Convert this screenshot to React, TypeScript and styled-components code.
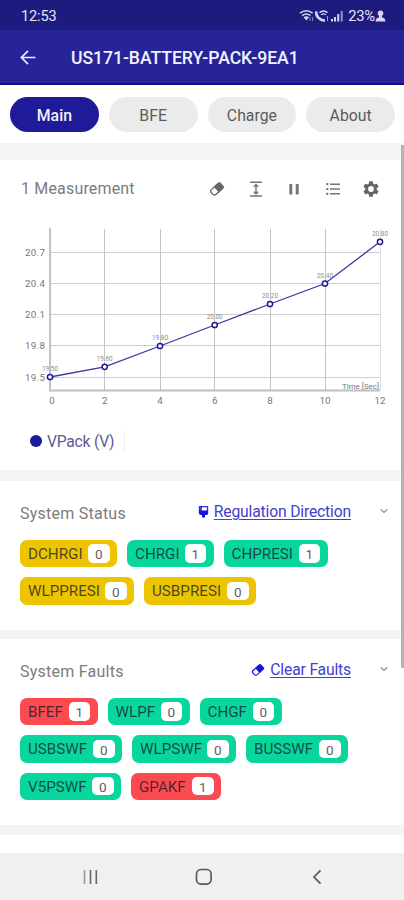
import React from "react";
import styled, { createGlobalStyle } from "styled-components";

const GlobalStyle = createGlobalStyle`
  * { box-sizing: border-box; }
  body { margin: 0; background: #fff; font-family: Roboto, "Liberation Sans", sans-serif; }
  button { font-family: inherit; border: 0; padding: 0; background: none; }
`;

const Screen = styled.div`
  width: 404px;
  height: 900px;
  display: flex;
  flex-direction: column;
  overflow: hidden;
  background: #fff;
`;

const StatusBar = styled.div`
  height: 30px;
  flex: none;
  display: flex;
  align-items: center;
  justify-content: space-between;
  padding: 2px 18px 0 21px;
  background: #1e1b7e;
  color: #e4e3f5;
  font-size: 14.5px;
`;

const StatusIcons = styled.div`
  display: flex;
  align-items: center;
  svg { display: block; }
`;

const Clock = styled.span`
  letter-spacing: -0.1px;
`;

const Percent = styled.span`
  margin-left: 2px;
  font-size: 14.8px;
  letter-spacing: -0.2px;
`;

const AppBar = styled.header`
  height: 55px;
  flex: none;
  display: flex;
  align-items: center;
  padding-left: 20px;
  background: #27249a;
  border-bottom: 2px solid #0f0c84;
`;

const Title = styled.h1`
  margin: 2px 0 0 35px;
  color: #f3f2fc;
  font-size: 17.6px;
  font-weight: 500;
  letter-spacing: -0.05px;
  white-space: nowrap;
`;

const Tabs = styled.nav`
  height: 58px;
  flex: none;
  display: grid;
  grid-template-columns: repeat(4, 1fr);
  gap: 10px;
  padding: 12px 9px 11px 10px;
`;

const Tab = styled.button<{ $active?: boolean }>`
  height: 35px;
  padding-top: 2px;
  border-radius: 18px;
  font-size: 15.8px;
  font-weight: ${(p) => (p.$active ? 500 : 400)};
  color: ${(p) => (p.$active ? "#f1f0fa" : "#5c5c5c")};
  background: ${(p) => (p.$active ? "#1f1b98" : "#ebebeb")};
`;

const Scroller = styled.main`
  height: 710px;
  flex: none;
  position: relative;
  background: #f4f4f4;
`;

const ScrollThumb = styled.div`
  position: absolute;
  top: 2px;
  right: 0;
  width: 3px;
  height: 523px;
  background: #b3b3b3;
`;

const Card = styled.section<{ $top: number; $height: number }>`
  margin-top: ${(p) => p.$top}px;
  height: ${(p) => p.$height}px;
  background: #fff;
  overflow: hidden;
`;

const Stack = styled.div`
  display: flex;
  flex-direction: column;
`;

const ChartHead = styled.div`
  display: flex;
  align-items: center;
  justify-content: space-between;
  height: 57px;
  padding: 0 25px 0 21px;
`;

const Tools = styled.div`
  display: flex;
  gap: 22.4px;
  color: #666;
  svg { display: block; }
`;

const Heading = styled.h2<{ $spacing?: number }>`
  margin: 0;
  font-size: 16px;
  line-height: 20px;
  font-weight: 400;
  color: #7c7c7c;
  letter-spacing: ${(p) => p.$spacing ?? 0}px;
  white-space: nowrap;
`;

const Legend = styled.div`
  display: inline-flex;
  align-items: center;
  gap: 5px;
  height: 20px;
  margin: 21px 0 0 30px;
  padding-right: 10px;
  border-right: 1px solid #eee;
  color: #5d5994;
  font-size: 15.7px;
  letter-spacing: -0.25px;
`;

const Dot = styled.i`
  width: 12px;
  height: 12px;
  border-radius: 50%;
  background: #1e1a9d;
`;

const SectionHead = styled.div`
  display: flex;
  height: 59px;
  padding: 21px 15px 0 20px;
`;

const HeadingSlot = styled.div`
  flex: 1;
  padding-top: 2px;
`;

const Link = styled.a`
  font-size: 15.7px;
  line-height: 20px;
  color: #4340cf;
  text-decoration: underline;
  text-decoration-thickness: 1px;
  text-underline-offset: 2px;
  letter-spacing: -0.17px;
  white-space: nowrap;
`;

const IconSlot = styled.span<{ $gap: number }>`
  display: flex;
  height: 20px;
  align-items: center;
  margin-right: ${(p) => p.$gap}px;
`;

const ChevronSlot = styled.span`
  display: flex;
  height: 18px;
  align-items: center;
  margin-left: 28px;
`;

const Chips = styled.div`
  display: flex;
  flex-direction: column;
  gap: 10px;
  padding-left: 20px;
`;

const ChipRow = styled.div`
  display: flex;
  gap: 10px;
`;

const tones = { amber: "#edc400", green: "#08d69d", red: "#fb4a50" };
type Tone = keyof typeof tones;

const ChipBox = styled.div<{ $tone: Tone; $width: number }>`
  width: ${(p) => p.$width}px;
  height: 27.3px;
  flex: none;
  display: flex;
  align-items: center;
  justify-content: space-between;
  padding: 0 7.5px 0 8px;
  border-radius: 7px;
  background: ${(p) => tones[p.$tone]};
  color: rgba(20, 25, 40, 0.75);
  font-size: 15.2px;
  white-space: nowrap;
`;

const ChipName = styled.span`
  padding-top: 1px;
`;

const Count = styled.span`
  width: 21.5px;
  height: 18.5px;
  padding-top: 1px;
  border-radius: 5px;
  background: #fff;
  color: #606060;
  font-size: 13.5px;
  line-height: 18px;
  text-align: center;
`;

const NavBar = styled.footer`
  height: 47px;
  flex: none;
  display: flex;
  align-items: center;
  padding-left: 82px;
  background: #f0f0f0;
  svg { display: block; }
`;

const NavGap = styled.span<{ $width: number }>`
  width: ${(p) => p.$width}px;
`;

type ChipData = [name: string, value: number, tone: Tone, width: number];

const statusRows: ChipData[][] = [
  [["DCHRGI", 0, "amber", 97], ["CHRGI", 1, "green", 86.5], ["CHPRESI", 1, "green", 104]],
  [["WLPPRESI", 0, "amber", 114], ["USBPRESI", 0, "amber", 112]],
];

const faultRows: ChipData[][] = [
  [["BFEF", 1, "red", 77.5], ["WLPF", 0, "green", 82], ["CHGF", 0, "green", 82]],
  [["USBSWF", 0, "green", 102], ["WLPSWF", 0, "green", 104], ["BUSSWF", 0, "green", 102]],
  [["V5PSWF", 0, "green", 101], ["GPAKF", 1, "red", 90]],
];

const ChipGrid = ({ rows }: { rows: ChipData[][] }) => (
  <Chips>
    {rows.map((row, i) => (
      <ChipRow key={i}>
        {row.map(([name, value, tone, width]) => (
          <ChipBox key={name} $tone={tone} $width={width}>
            <ChipName>{name}</ChipName>
            <Count>{value}</Count>
          </ChipBox>
        ))}
      </ChipRow>
    ))}
  </Chips>
);

const Eraser = ({ size, color }: { size: number; color: string }) => (
  <svg width={size} height={size} viewBox="0 0 16 16">
    <g transform="rotate(-42 8 8)">
      <rect x="1.400" y="4.700" width="12" height="6.600" rx="2" fill="none" stroke={color} strokeWidth="1.300" />
      <path d="M7 4.100h6.400a1.500 1.500 0 0 1 1.500 1.500v4.800a1.500 1.500 0 0 1-1.500 1.500H7z" fill={color} />
    </g>
  </svg>
);

const Chevron = () => (
  <svg width="10" height="8" viewBox="0 0 10 8">
    <path d="M1.800 2.300l3.200 3.200 3.200-3.200" fill="none" stroke="#888" strokeWidth="1.200" />
  </svg>
);

const points = [
  { t: 0, x: 50, y: 377, label: "19.50" },
  { t: 2, x: 104.7, y: 366.8, label: "19.60" },
  { t: 4, x: 160, y: 346, label: "19.80" },
  { t: 6, x: 214.7, y: 325, label: "20.00" },
  { t: 8, x: 270, y: 304, label: "20.20" },
  { t: 10, x: 325, y: 283.5, label: "20.40" },
  { t: 12, x: 380, y: 241.8, label: "20.80" },
];

const levels = [
  { y: 252.5, label: "20.7" },
  { y: 283.5, label: "20.4" },
  { y: 314.5, label: "20.1" },
  { y: 345.5, label: "19.8" },
  { y: 377.5, label: "19.5" },
];

const ChartSvg = styled.svg`
  display: block;
  font-family: Roboto, "Liberation Sans", sans-serif;
`;

const Chart = () => (
  <ChartSvg width="401" height="193" viewBox="0 217 401 193">
    {levels.map((l) => (
      <g key={l.label}>
        <path d={`M50 ${l.y}H380`} stroke="#cfcfcf" />
        <text x="25" y={l.y + 3} fontSize="9.8" fill="#777" textLength="20">{l.label}</text>
      </g>
    ))}
    {points.map((p, i) => (
      <g key={p.t}>
        <path d={`M${Math.floor(p.x) + 0.5} 229V390`} stroke={i === 6 ? "#ddd" : "#c4c4c4"} />
        <text x={i === 0 ? 52 : p.x} y="403.5" fontSize="9.800" fill="#777" textAnchor="middle">{p.t}</text>
      </g>
    ))}
    <path d="M50 228V390.500H380" fill="none" stroke="#c0c0c0" strokeWidth="1.800" />
    <text x="342" y="389" fontSize="7.800" fill="#777" textLength="37">Time [Sec]</text>
    <polyline points={points.map((p) => `${p.x},${p.y}`).join(" ")} fill="none" stroke="#3d389d" strokeWidth="1.300" />
    {points.map((p) => (
      <g key={p.t}>
        <circle cx={p.x} cy={p.y} r="2.600" fill="#fff" stroke="#1d198f" strokeWidth="1.500" />
        <text x={p.x} y={p.y - 6} fontSize="6.400" fill="#8c8c8c" textAnchor="middle" textLength="16">{p.label}</text>
      </g>
    ))}
  </ChartSvg>
);

export default function App() {
  return (
    <Screen>
      <GlobalStyle />
      <StatusBar>
        <Clock>12:53</Clock>
        <StatusIcons>
          <svg width="47" height="14" viewBox="0 0 47 14" fill="none" stroke="#d5d4ee">
            <path d="M1 4.200Q7.300-.8 13.600 4.200M3.200 6.600Q7.300 3.400 11.400 6.600" strokeWidth="1.600" />
            <path d="M4.600 8.200Q7.300 6.400 10 8.200L7.300 11.500z" fill="#d5d4ee" stroke="none" />
            <path d="M11 8v4M13.500 8v4" stroke="#8583bd" />
            <path d="M17.300 2.400c-.8 4.800 3.200 9 8.600 9.200" strokeWidth="2.600" />
            <path d="M20.500 3.600Q24.500.2 28.500 3.600M22.200 5.800Q24.500 4 26.800 5.800" strokeWidth="1.400" />
            <path d="M28.500 7v5" stroke="#9f9dcd" />
            <path d="M33 10v2.500M36 8v4.500M39.200 5v7.500" strokeWidth="2" />
            <path d="M42.700 2v10.500" strokeWidth="2" stroke="#9694c9" />
          </svg>
          <Percent>23%</Percent>
          <svg width="11" height="14" viewBox="0 0 11 14" fill="#d5d4ee">
            <circle cx="5.500" cy="4.200" r="2.800" />
            <path d="M4 6h3v2.500c2 .2 3.400 1 3.400 4H.6c0-3 1.400-3.800 3.400-4z" />
          </svg>
        </StatusIcons>
      </StatusBar>
      <AppBar>
        <svg width="16" height="16" viewBox="0 0 16 16" fill="none" stroke="#eeedfa" strokeWidth="1.700">
          <path d="M15.500 8.500H1.800M8 1.900L1.400 8.500 8 15.100" />
        </svg>
        <Title>US171-BATTERY-PACK-9EA1</Title>
      </AppBar>
      <Tabs>
        <Tab $active>Main</Tab>
        <Tab>BFE</Tab>
        <Tab>Charge</Tab>
        <Tab>About</Tab>
      </Tabs>
      <Scroller>
        <Stack>
          <Card $top={17} $height={310}>
            <ChartHead>
              <Heading $spacing={0.17}>1 Measurement</Heading>
              <Tools>
                <Eraser size={16} color="#666" />
                <svg width="16" height="16" viewBox="0 0 16 16" fill="none" stroke="#777" strokeWidth="1.400">
                  <path d="M2 1.200h12M2 15h12M8 4v8.500M5.800 5.700L8 3.500l2.200 2.200M5.800 10.700L8 12.900l2.200-2.200" />
                </svg>
                <svg width="16" height="16" viewBox="0 0 16 16" fill="#777">
                  <path d="M3.300 3h3v10.500h-3zM9.700 3h3v10.500h-3z" />
                </svg>
                <svg width="16" height="16" viewBox="0 0 16 16" stroke="#777" strokeWidth="1.400">
                  <path d="M5 3.200h10M5 8h10M5 12.800h10" />
                  <path d="M1.300 3.200h2M1.300 8h2M1.300 12.800h2" strokeWidth="2.200" />
                </svg>
                <svg width="16" height="16" viewBox="2 2 20 20" fill="#666">
                  <path d="M19.140 12.940c.04-.3.06-.61.06-.94s-.02-.64-.07-.94l2.030-1.580a.49.49 0 0 0 .12-.61l-1.920-3.320a.49.49 0 0 0-.59-.22l-2.390.96a7 7 0 0 0-1.620-.94l-.36-2.540a.48.48 0 0 0-.48-.41h-3.840a.48.48 0 0 0-.47.41l-.36 2.540a7 7 0 0 0-1.620.94l-2.390-.96a.48.48 0 0 0-.59.22L2.740 8.870a.48.48 0 0 0 .12.610l2.030 1.580a7 7 0 0 0 0 1.880l-2.030 1.580a.49.49 0 0 0-.12.610l1.920 3.320c.12.220.37.290.59.220l2.390-.96c.5.380 1.030.7 1.620.94l.36 2.540c.05.24.24.41.48.41h3.840c.24 0 .44-.17.47-.41l.36-2.540a7 7 0 0 0 1.620-.94l2.390.96c.22.080.47 0 .59-.22l1.920-3.320a.48.48 0 0 0-.12-.61zM12 15.600a3.600 3.600 0 1 1 0-7.200 3.600 3.600 0 0 1 0 7.200z" />
                </svg>
              </Tools>
            </ChartHead>
            <Chart />
            <Legend><Dot />VPack (V)</Legend>
          </Card>
          <Card $top={11} $height={149}>
            <SectionHead>
              <HeadingSlot><Heading $spacing={0.24}>System Status</Heading></HeadingSlot>
              <IconSlot $gap={5}>
                <svg width="11" height="14" viewBox="0 0 11 14">
                  <path d="M1.500 1.600h8v5.800a2 2 0 0 1-2 2h-4a2 2 0 0 1-2-2z" fill="#fff" stroke="#3431dc" strokeWidth="1.400" />
                  <path d="M1 5.500h9v2a2.500 2.500 0 0 1-2.500 2.500H7v2.500H4V10h-.5A2.500 2.500 0 0 1 1 7.500z" fill="#1713dc" />
                  <path d="M3 1v5" stroke="#1713dc" strokeWidth="1.500" />
                </svg>
              </IconSlot>
              <Link>Regulation Direction</Link>
              <ChevronSlot><Chevron /></ChevronSlot>
            </SectionHead>
            <ChipGrid rows={statusRows} />
          </Card>
          <Card $top={9} $height={186}>
            <SectionHead>
              <HeadingSlot><Heading $spacing={0.24}>System Faults</Heading></HeadingSlot>
              <IconSlot $gap={5}><Eraser size={14} color="#1713dc" /></IconSlot>
              <Link>Clear Faults</Link>
              <ChevronSlot><Chevron /></ChevronSlot>
            </SectionHead>
            <ChipGrid rows={faultRows} />
          </Card>
          <Card $top={10} $height={18} />
        </Stack>
        <ScrollThumb />
      </Scroller>
      <NavBar>
        <svg width="16" height="16" viewBox="0 0 16 16" strokeWidth="1.600">
          <path d="M2.500 1v14" stroke="#999" />
          <path d="M8.500 1v14M14.300 1v14" stroke="#666" />
        </svg>
        <NavGap $width={97} />
        <svg width="18" height="18" viewBox="0 0 18 18">
          <rect x="1.500" y="1.500" width="14.600" height="14.600" rx="4.500" fill="none" stroke="#555" strokeWidth="1.600" />
        </svg>
        <NavGap $width={99} />
        <svg width="10" height="16" viewBox="0 0 10 16">
          <path d="M8.500 1.400L2 8l6.500 6.600" fill="none" stroke="#555" strokeWidth="1.600" />
        </svg>
      </NavBar>
    </Screen>
  );
}
